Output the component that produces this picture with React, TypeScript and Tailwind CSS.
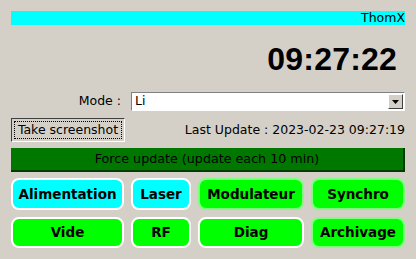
import React from "react";

const font = { fontFamily: '"DejaVu Sans", sans-serif' };

type Tile = { label: string; tone: "cyan" | "green"; ring: "white" | "soft" };

const tiles: Tile[] = [
  { label: "Alimentation", tone: "cyan", ring: "white" },
  { label: "Laser", tone: "cyan", ring: "white" },
  { label: "Modulateur", tone: "green", ring: "soft" },
  { label: "Synchro", tone: "green", ring: "soft" },
  { label: "Vide", tone: "green", ring: "white" },
  { label: "RF", tone: "green", ring: "white" },
  { label: "Diag", tone: "green", ring: "white" },
  { label: "Archivage", tone: "green", ring: "soft" },
];

export default function App() {
  return (
    <div
      className="flex h-[259px] w-[416px] flex-col bg-[#d4d0c8] px-[11px] pt-[11px] text-black"
      style={font}
    >
      <div className="flex h-[14px] items-center justify-end bg-[#00ffff] text-[12.5px] leading-none">
        ThomX
      </div>

      <div className="flex h-[67px] items-center justify-end pr-[8px]">
        <span className="font-['Liberation_Sans',sans-serif] text-[32px] font-bold leading-none tracking-[0.2px]">
          09:27:22
        </span>
      </div>

      <div className="flex h-[19px] items-center">
        <span className="w-[120px] pr-[10px] text-right text-[12.5px]">Mode :</span>
        <div className="flex h-[19px] flex-1 items-center border border-t-[#808080] border-l-[#808080] border-b-white border-r-white bg-white">
          <span className="flex-1 pl-[3px] text-[12.5px] leading-none">Li</span>
          <div className="mr-[1px] flex h-[15px] w-[15px] items-center justify-center border border-t-white border-l-white border-b-[#404040] border-r-[#404040] bg-[#d4d0c8]">
            <svg width="7" height="4" viewBox="0 0 7 4">
              <path d="M0 0h7L3.5 4z" fill="#000" />
            </svg>
          </div>
        </div>
      </div>

      <div className="mt-[7px] flex h-[24px] items-center justify-between">
        <button className="flex h-[24px] w-[114px] items-center justify-center border border-t-[#404040] border-l-[#404040] border-b-white border-r-white p-[2px]">
          <span className="flex h-full w-full items-center justify-center whitespace-nowrap border border-dotted border-black text-[12.5px] leading-none">
            Take screenshot
          </span>
        </button>
        <span className="text-[12.5px]">Last Update : 2023-02-23 09:27:19</span>
      </div>

      <div className="mt-[6px] flex h-[24px] items-center justify-center border-b-2 border-r-2 border-b-[#003c00] border-r-[#003c00] bg-[#007800] text-[12.7px]">
        Force update (update each 10 min)
      </div>

      <div className="mt-[6px] grid grid-cols-[113px_60px_106px_94px] grid-rows-[32px_31px] gap-[7px]">
        {tiles.map((t) => (
          <div
            key={t.label}
            className={`flex items-center justify-center rounded-[8px] border-2 text-[13.5px] font-bold ${
              t.tone === "cyan" ? "bg-[#00ffff]" : "bg-[#00ff00]"
            } ${t.ring === "white" ? "border-white" : "border-[#7dff7d]"}`}
          >
            {t.label}
          </div>
        ))}
      </div>
    </div>
  );
}
